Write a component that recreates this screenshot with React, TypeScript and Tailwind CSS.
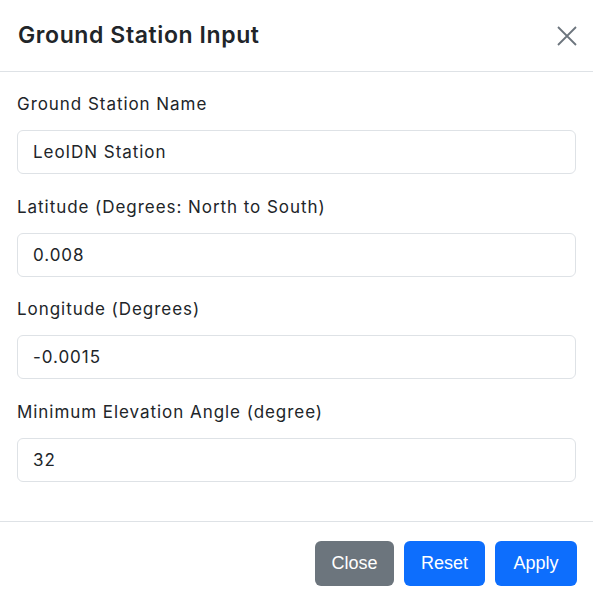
import React from "react";

const fields = [
  { label: "Ground Station Name", value: "LeoIDN Station" },
  { label: "Latitude (Degrees: North to South)", value: "0.008" },
  { label: "Longitude (Degrees)", value: "-0.0015" },
  { label: "Minimum Elevation Angle (degree)", value: "32" },
];

const font = "Inter, 'Noto Sans', sans-serif";
const btnFont = "'Liberation Sans', Arial, sans-serif";

export default function App() {
  return (
    <div
      className="w-[593px] h-[601px] bg-white text-[#212529] flex flex-col"
      style={{ fontFamily: font }}
    >
      <div className="h-[72px] border-b border-[#dee2e6] flex items-center justify-between pl-[18px] pr-[16px] shrink-0">
        <h1 className="text-[23px] font-semibold leading-none tracking-[0.6px] text-[#212529]">Ground Station Input</h1>
        <button className="w-[20px] h-[20px] flex items-center justify-center" aria-label="Close">
          <svg width="20" height="20" viewBox="0 0 20 20">
            <path d="M1 1 L19 19 M19 1 L1 19" stroke="#6c757d" strokeWidth="1.8" strokeLinecap="butt" />
          </svg>
        </button>
      </div>
      <div className="px-[17px] pt-[20px] pb-[18px] flex flex-col">
        {fields.map((f) => (
          <div key={f.label} className="mb-[20.7px] flex flex-col">
            <label className="text-[17px] leading-[24px] tracking-[0.95px] mb-[14px] text-[#212529]">{f.label}</label>
            <input
              readOnly
              value={f.value}
              className="h-[44px] w-full border border-[#dee2e6] rounded-[6px] px-[15px] text-[17px] tracking-[0.95px] text-[#212529] outline-none"
              style={{ fontFamily: font }}
            />
          </div>
        ))}
      </div>
      <div className="border-t border-[#dee2e6] flex justify-end items-start gap-[10px] pt-[19px] pr-[16px]">
        <button className="h-[45px] w-[79px] rounded-[6px] bg-[#6c757d] text-white text-[18px]" style={{ fontFamily: btnFont }}>Close</button>
        <button className="h-[45px] w-[81px] rounded-[6px] bg-[#0d6efd] text-white text-[18px]" style={{ fontFamily: btnFont }}>Reset</button>
        <button className="h-[45px] w-[82px] rounded-[6px] bg-[#0d6efd] text-white text-[18px]" style={{ fontFamily: btnFont }}>Apply</button>
      </div>
    </div>
  );
}
